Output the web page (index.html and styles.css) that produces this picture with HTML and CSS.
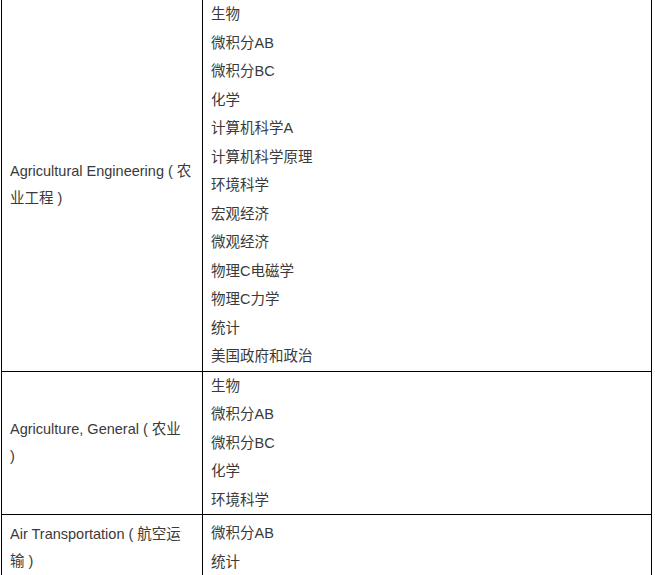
FILE: index.html
```html
<!DOCTYPE html>
<html lang="zh-CN">
<head>
<meta charset="utf-8">
<title>专业与AP课程</title>
<link rel="stylesheet" href="styles.css">
</head>
<body>
<table class="major-table">
  <tbody>
    <tr class="row">
      <td class="major">Agricultural Engineering ( 农<br>业工程 )</td>
      <td class="courses">
        <p class="item">生物</p>
        <p class="item">微积分AB</p>
        <p class="item">微积分BC</p>
        <p class="item">化学</p>
        <p class="item">计算机科学A</p>
        <p class="item">计算机科学原理</p>
        <p class="item">环境科学</p>
        <p class="item">宏观经济</p>
        <p class="item">微观经济</p>
        <p class="item">物理C电磁学</p>
        <p class="item">物理C力学</p>
        <p class="item">统计</p>
        <p class="item">美国政府和政治</p>
      </td>
    </tr>
    <tr class="row">
      <td class="major">Agriculture, General ( 农业<br>)</td>
      <td class="courses">
        <p class="item">生物</p>
        <p class="item">微积分AB</p>
        <p class="item">微积分BC</p>
        <p class="item">化学</p>
        <p class="item">环境科学</p>
      </td>
    </tr>
    <tr class="row row-short">
      <td class="major">Air Transportation ( 航空运<br>输 )</td>
      <td class="courses">
        <p class="item">微积分AB</p>
        <p class="item">统计</p>
      </td>
    </tr>
  </tbody>
</table>
</body>
</html>
```
FILE: styles.css
```css
html, body {
  margin: 0;
  padding: 0;
  background: #ffffff;
}

body {
  font-family: "Liberation Sans", "Noto Sans CJK SC", sans-serif;
  font-size: 14.5px;
  color: #3a3a3a;
}

.major-table {
  border-collapse: collapse;
  width: 651px;
  margin: -1px 0 0 1px;
}

.major-table td {
  border: 1px solid #000000;
  vertical-align: middle;
}

.major {
  width: 184px;
  padding: 0 8px;
  line-height: 27px;
  white-space: nowrap;
}

.courses {
  padding: 0 8px;
}

.item {
  margin: 0;
  line-height: 28.5px;
  white-space: nowrap;
}

.row-short td {
  padding-top: 4px;
  padding-bottom: 4px;
}
```
